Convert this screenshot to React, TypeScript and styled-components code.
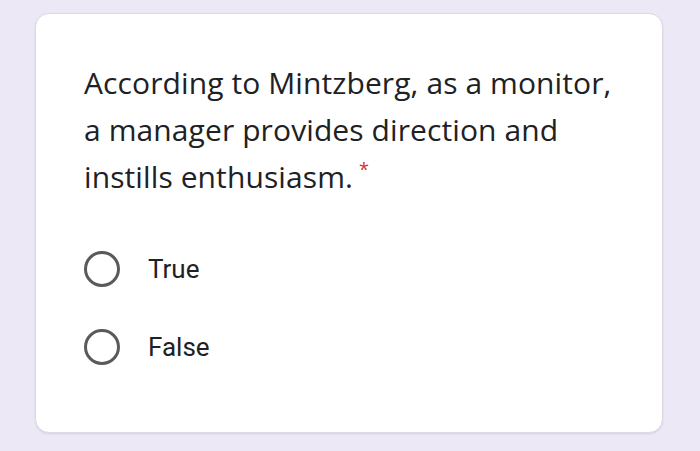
import React from 'react';
import styled, { createGlobalStyle } from 'styled-components';

const GlobalStyle = createGlobalStyle`
  html, body {
    margin: 0;
    padding: 0;
    background-color: #ece8f6;
  }
`;

const Page = styled.div`
  width: 700px;
  height: 451px;
  box-sizing: border-box;
  padding: 13px 0 0 35px;
  background-color: #ece8f6;
`;

const Card = styled.div`
  width: 628px;
  height: 420px;
  box-sizing: border-box;
  background-color: #ffffff;
  border: 1px solid #dcdae3;
  border-radius: 14px;
  box-shadow: 0 1px 2px rgba(60, 50, 90, 0.12);
  padding: 45px 20px 0 48px;
`;

const Question = styled.div`
  font-family: 'Open Sans', Lato, sans-serif;
  font-size: 30px;
  line-height: 47px;
  letter-spacing: 0.1px;
  color: #202124;
  white-space: nowrap;
`;

const Required = styled.span`
  color: #d93025;
  font-size: 18px;
  line-height: 0;
  margin-left: 6px;
  vertical-align: 12px;
`;

const Options = styled.div`
  display: flex;
  flex-direction: column;
  gap: 42px;
  margin-top: 51px;
`;

const Option = styled.label`
  display: flex;
  align-items: center;
  gap: 28px;
  height: 36px;
  cursor: pointer;
`;

const Radio = styled.span`
  width: 36px;
  height: 36px;
  box-sizing: border-box;
  border: 3px solid #5a5a5e;
  border-radius: 50%;
  flex-shrink: 0;
`;

const OptionLabel = styled.span`
  font-family: Roboto, 'Liberation Sans', sans-serif;
  font-size: 26px;
  color: #202124;
`;

const options = ['True', 'False'];

export default function App() {
  return (
    <>
      <GlobalStyle />
      <Page>
        <Card>
          <Question>
            According to Mintzberg, as a monitor,
            <br />
            a manager provides direction and
            <br />
            instills enthusiasm.
            <Required>*</Required>
          </Question>
          <Options>
            {options.map((opt) => (
              <Option key={opt}>
                <Radio />
                <OptionLabel>{opt}</OptionLabel>
              </Option>
            ))}
          </Options>
        </Card>
      </Page>
    </>
  );
}
